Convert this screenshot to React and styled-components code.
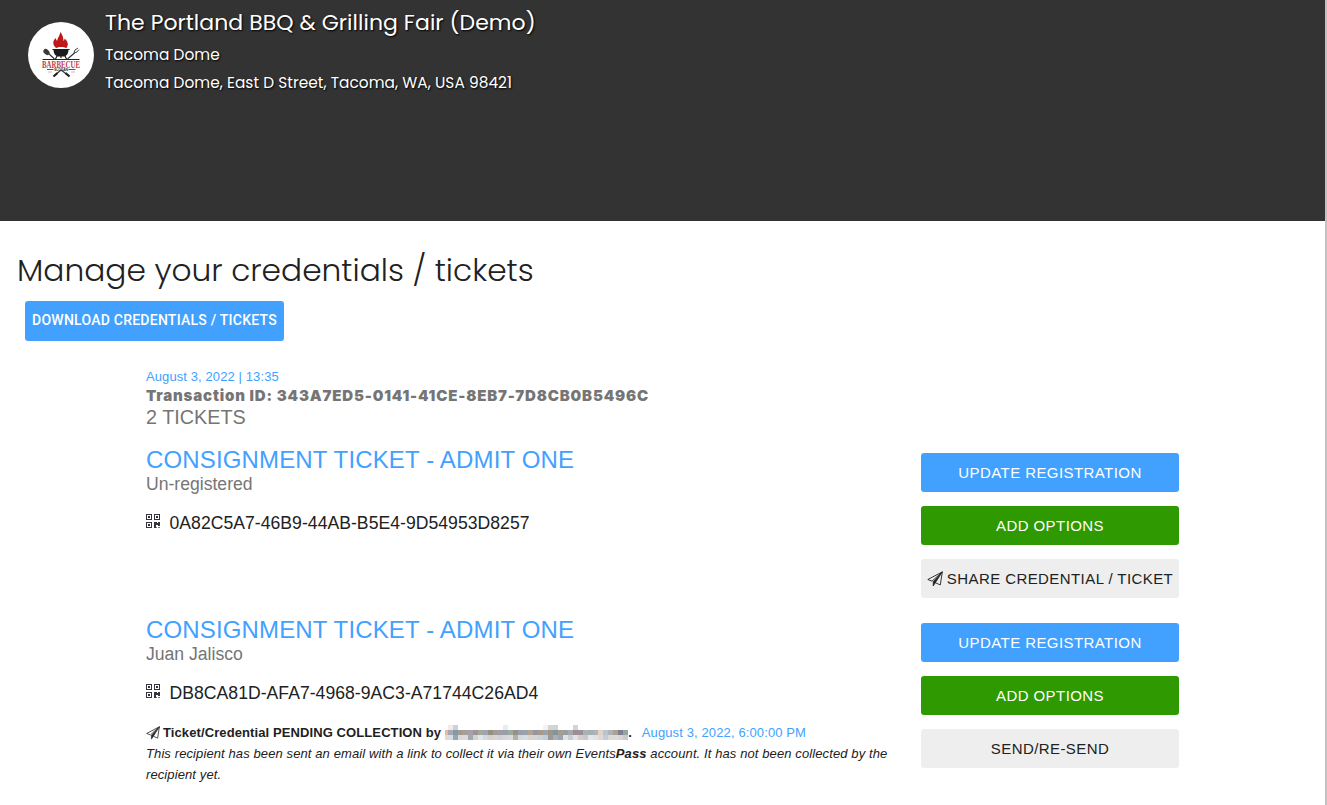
import React from 'react';
import styled, { createGlobalStyle } from 'styled-components';

const GlobalStyle = createGlobalStyle`
  * {
    box-sizing: border-box;
  }

  body {
    margin: 0;
    background: #fff;
    color: #212121;
    font-family: 'Liberation Sans', Arial, sans-serif;
    overflow: hidden;
  }

  h1, h2, h3, p {
    margin: 0;
    font-weight: 400;
  }
`;

const Page = styled.div`
  height: 805px;
  overflow: hidden;
  border-right: 2px solid #c1c1c1;
`;

const Header = styled.header`
  display: flex;
  gap: 11px;
  height: 221px;
  padding: 0 28px;
  background: #333;
`;

const Avatar = styled.div`
  width: 66px;
  height: 66px;
  margin-top: 22px;
  border-radius: 50%;
  background: #fff;
  overflow: hidden;

  svg {
    display: block;
  }
`;

const EventInfo = styled.div`
  color: #fff;
  font-family: Poppins, Inter, sans-serif;
  text-shadow: 1px 1px 2px #000;
  white-space: nowrap;
`;

const EventName = styled.h2`
  height: 41px;
  padding-top: 1px;
  font-size: 22px;
  line-height: 44px;
  letter-spacing: 0.04px;
`;

const EventLine = styled.p`
  font-size: 15.4px;
  line-height: 28px;
  letter-spacing: 0.03px;
`;

const Title = styled.h1`
  padding: 25px 0 0 17px;
  font-family: Poppins, Inter, sans-serif;
  font-size: 31.25px;
  font-weight: 300;
  line-height: 48px;
  white-space: nowrap;
`;

const Button = styled.button`
  display: flex;
  align-items: center;
  justify-content: center;
  gap: 4px;
  width: ${props => props.$width || '258px'};
  height: ${props => props.$height || '39px'};
  padding: 0;
  border: 0;
  border-radius: 3px;
  background: ${props => props.$bg || '#42a1ff'};
  color: ${props => props.$color || '#fff'};
  font-family: inherit;
  font-size: 15px;
  letter-spacing: 0.42px;
  white-space: nowrap;
`;

const DownloadButton = styled(Button)`
  margin: 7px 0 0 25px;
  padding-bottom: 2px;
  font-family: Roboto, sans-serif;
  font-size: 14px;
  font-weight: 500;
  letter-spacing: 0.24px;
`;

const Orders = styled.main`
  width: 1033px;
  margin: 27px 0 0 146px;
`;

const OrderDate = styled.p`
  color: #42a1ff;
  font-size: 13px;
  line-height: 17px;
  letter-spacing: 0.1px;
`;

const TransactionId = styled.p`
  color: #757575;
  font-family: 'Arial Black', Inter, sans-serif;
  font-size: 15px;
  font-weight: 900;
  line-height: 21px;
  letter-spacing: 0.83px;
  white-space: nowrap;
`;

const TicketCount = styled.p`
  color: #757575;
  font-size: 19.8px;
  line-height: 22px;
`;

const Ticket = styled.section`
  display: flex;
  justify-content: space-between;
  height: 145px;
  margin-top: 25px;
`;

const Details = styled.div`
  width: 750px;
`;

const TicketName = styled.h3`
  margin-top: -7px;
  color: #42a1ff;
  font-size: 24px;
  line-height: 28px;
  letter-spacing: 0.15px;
`;

const Holder = styled.p`
  color: #757575;
  font-size: 17.6px;
  line-height: 20px;
`;

const Code = styled.p`
  display: flex;
  align-items: center;
  gap: 8.5px;
  margin-top: 18px;
  font-size: 17.6px;
  line-height: 22px;
  letter-spacing: 0.03px;

  svg {
    margin-top: -3px;
  }
`;

const Pending = styled.p`
  display: flex;
  align-items: center;
  margin-top: 18px;
  font-size: 13px;
  font-weight: 700;
  line-height: 21px;
  white-space: nowrap;
`;

const PendingText = styled.span`
  margin: 0 4px 0 3px;
  letter-spacing: 0.1px;
`;

const PendingDate = styled.span`
  margin-left: 10px;
  color: #42a1ff;
  font-weight: 400;
  letter-spacing: 0.12px;
`;

const Note = styled.p`
  font-size: 13px;
  font-style: italic;
  line-height: 21px;
  letter-spacing: 0.105px;
`;

const Actions = styled.div`
  display: flex;
  flex-direction: column;
  gap: 14px;
`;

const BarbecueLogo = () => (
  <svg width="66" height="66" viewBox="0 0 66 66">
    <path
      d="M28 26c-4-4-3-7-.5-10 .6 1.500 1 2 1.500 3 .5-3 2.500-5 3.500-9 2 3 3 6 3 9 .8-.8 1-1.500 1.200-2.500 3.500 3.500 4 6.500 1.800 9.500-3-1.500-8-1.500-10.500 0z"
      fill="#c01818"
    />
    <path d="M25.500 27.500h15c0 5-3 7-5 7h-5c-2 0-5-2-5-7z" fill="#1c1c1c" />
    <path d="M24.500 27.500h17M29.500 33l-2 4M36.500 33l2 4M33 34v2" stroke="#1c1c1c" strokeWidth="1.2" />
    <path d="M20 31l6.500 6M46.500 31l-7 6M26 54l7-6M41 54l-8-6" stroke="#333" strokeWidth="1.2" />
    <path d="M25.500 54.500l4-3.500M41.500 54.500l-4-3.500" stroke="#222" strokeWidth="2.2" />
    <ellipse cx="18.500" cy="30" rx="2.500" ry="3.500" transform="rotate(-48 18.500 30)" fill="#3a3a3a" />
    <path d="M46 31l1-3 3-2M46 31l3-1 2-2.500" stroke="#444" fill="none" />
    <path d="M14.500 37.500h37" stroke="#222" strokeWidth="1" />
    <path d="M19 47.500h6.500M40.500 47.500h7" stroke="#555" strokeWidth="1" />
    <path d="M20 50h4M43 50h4" stroke="#e0b0b0" strokeWidth="1" />
    <text
      x="33"
      y="45.600"
      textAnchor="middle"
      textLength="38"
      lengthAdjust="spacingAndGlyphs"
      fontFamily="Liberation Serif, serif"
      fontWeight="700"
      fontSize="9.500"
      fill="#c23a40"
    >
      BARBECUE
    </text>
    <text
      x="33"
      y="49.200"
      textAnchor="middle"
      textLength="14"
      fontFamily="Liberation Sans, sans-serif"
      fontWeight="700"
      fontSize="3.400"
      fill="#333"
    >
      SLOGAN
    </text>
  </svg>
);

const QrIcon = () => (
  <svg width="15" height="15" viewBox="0 0 15 15" fill="none" shapeRendering="crispEdges">
    <path d="M.5.5h5v5h-5zM8.500.5h5v5h-5zM.5 8.500h5v5h-5z" stroke="#35353f" />
    <path
      d="M2 2h2v2H2zM10 2h2v2h-2zM2 10h2v2H2zM8 8h3v1h1V8h2v4h-2v-1h-2v3H8z"
      fill="#35353f"
    />
    <path d="M10 13h1v1h-1zM12 13h2v1h-2z" fill="#777" />
  </svg>
);

const PlaneIcon = ({ size = 15 }) => (
  <svg width={size} height={size} viewBox="0 0 16 16" fill="none" stroke="#212121" strokeLinejoin="round">
    <path d="M15.300.9.8 8.500l4.200 1.700L15.300.9l-2 13-5-2.200" strokeWidth=".9" />
    <path d="M15.300.9 6.200 10.800v4.200l2-3z" fill="#212121" strokeWidth=".7" />
  </svg>
);

// mosaic that hides the recipient's address, first column is clipped to 3px
const mosaicTop = { 1: '#f5ebe6', 2: '#c9d2d8', 12: '#e8ecea', 20: '#f8f2ec', 21: '#d0d5d8', 22: '#ced3d6', 26: '#d2d4d6' };

const mosaicMiddle = [
  '#e3b9aa', '#a9a7b0', '#7f9ba8', '#a59a90', '#a69e98', '#aba0a5', '#9b9498', '#a4a6a2', '#9ba6b4', '#988e84',
  '#a39c98', '#a39ba5', '#93a3a5', '#9fa6a6', '#9b8f84', '#93a0ad', '#98a2ad', '#b0a496', '#9695a5',
  '#a69a8f', '#9aa3ae', '#a09688', '#7f959f', '#a49e92', '#8fa1a8', '#a9a9ab', '#998f96', '#9b9093', '#aab0b5',
  '#a5b0b2', '#adb5bb', '#e0d5c5', '#b8c3d0', '#aeb3b3', '#ada08f', '#7b8092', '#95a3a3',
];

const mosaicBottom = [
  '#f0d5ce', '#d9dce3', '#8fa9b7', '#ddd9d5', '#dedbd9', '#9fa9b0', '#d6d2ce', '#e3e6e8', '#d0dbe0', '#d9d0cb',
  '#dad5d0', '#d2d0d8', '#d0d9db', '#dadcdc', '#b5b0a0', '#d2d9df', '#d9dde0', '#dbd5cf', '#d5d4db',
  '#cfd3d6', '#c5cdd9', '#9c9990', '#a6b0ba', '#9ba4b2', '#e6e3df', '#c9ced6', '#dfe4e8', '#d6cdca', '#c7c9d2',
  '#e5e7e6', '#dfe3e6', '#e0d8d2', '#c5cbd8', '#dcdad4', '#dedad5', '#d8d5d8', '#c9cccf',
];

const HiddenEmail = () => (
  <svg width="183" height="15" viewBox="2 0 183 15" shapeRendering="crispEdges">
    {mosaicMiddle.map((fill, index) => (
      <g key={index}>
        {mosaicTop[index] && <rect x={index * 5} y="0" width="5" height="5" fill={mosaicTop[index]} />}
        <rect x={index * 5} y="5" width="5" height="5" fill={fill} />
        <rect x={index * 5} y="10" width="5" height="5" fill={mosaicBottom[index]} />
      </g>
    ))}
  </svg>
);

const tickets = [
  { name: 'CONSIGNMENT TICKET - ADMIT ONE', holder: 'Un-registered', code: '0A82C5A7-46B9-44AB-B5E4-9D54953D8257' },
  {
    name: 'CONSIGNMENT TICKET - ADMIT ONE',
    holder: 'Juan Jalisco',
    code: 'DB8CA81D-AFA7-4968-9AC3-A71744C26AD4',
    pending: 'August 3, 2022, 6:00:00 PM',
  },
];

const App = () => (
  <>
    <GlobalStyle />
    <Page>
      <Header>
        <Avatar>
          <BarbecueLogo />
        </Avatar>
        <EventInfo>
          <EventName>The Portland BBQ &amp; Grilling Fair (Demo)</EventName>
          <EventLine>Tacoma Dome</EventLine>
          <EventLine>Tacoma Dome, East D Street, Tacoma, WA, USA 98421</EventLine>
        </EventInfo>
      </Header>
      <Title>Manage your credentials / tickets</Title>
      <DownloadButton $width="259px" $height="40px">DOWNLOAD CREDENTIALS / TICKETS</DownloadButton>
      <Orders>
        <OrderDate>August 3, 2022 | 13:35</OrderDate>
        <TransactionId>Transaction ID: 343A7ED5-0141-41CE-8EB7-7D8CB0B5496C</TransactionId>
        <TicketCount>2 TICKETS</TicketCount>
        {tickets.map((ticket) => (
          <Ticket key={ticket.code}>
            <Details>
              <TicketName>{ticket.name}</TicketName>
              <Holder>{ticket.holder}</Holder>
              <Code>
                <QrIcon />
                {ticket.code}
              </Code>
              {ticket.pending && (
                <>
                  <Pending>
                    <PlaneIcon size={14} />
                    <PendingText>Ticket/Credential PENDING COLLECTION by</PendingText>
                    <HiddenEmail />.
                    <PendingDate>{ticket.pending}</PendingDate>
                  </Pending>
                  <Note>
                    This recipient has been sent an email with a link to collect it via their own Events<b>Pass</b>{' '}
                    account. It has not been collected by the{' '}
                    <span>recipient yet.</span>
                  </Note>
                </>
              )}
            </Details>
            <Actions>
              <Button>UPDATE REGISTRATION</Button>
              <Button $bg="#2e9900">ADD OPTIONS</Button>
              <Button $bg="#eee" $color="#212121">
                {ticket.pending ? 'SEND/RE-SEND' : <><PlaneIcon size={16} />SHARE CREDENTIAL / TICKET</>}
              </Button>
            </Actions>
          </Ticket>
        ))}
      </Orders>
    </Page>
  </>
);

export default App;
